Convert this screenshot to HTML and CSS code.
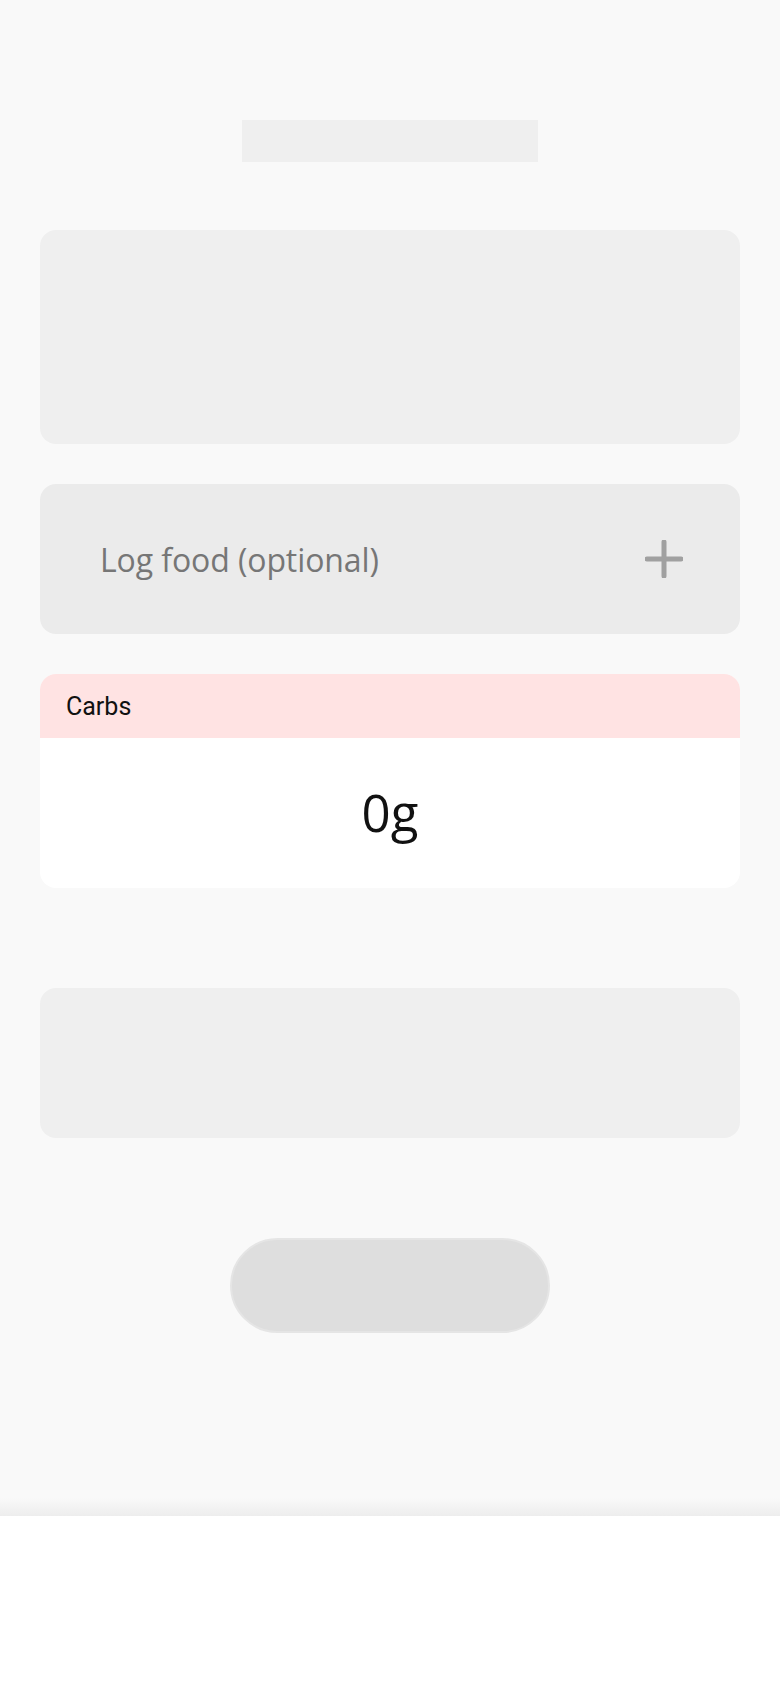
FILE: index.html
```html
<!DOCTYPE html>
<html lang="en">
<head>
    <meta charset="UTF-8">
    <meta name="viewport" content="width=device-width, initial-scale=1.0">
    <title>Log meal</title>
    <link rel="stylesheet" href="styles.css">
</head>
<body>
    <main class="screen">
        <div class="title-skeleton"></div>

        <div class="card card-skeleton card-tall"></div>

        <button class="log-food" type="button">
            <span class="log-food-label">Log food (optional)</span>
            <svg class="plus-icon" viewBox="0 0 38 38" aria-hidden="true">
                <path d="M19 2v34M2 19h34" stroke="currentColor" stroke-width="5" stroke-linecap="round" fill="none"/>
            </svg>
        </button>

        <section class="card macro">
            <div class="macro-head">Carbs</div>
            <div class="macro-value">0g</div>
        </section>

        <div class="card card-skeleton card-short"></div>

        <div class="pill-skeleton"></div>
    </main>

    <footer class="bottom-bar"></footer>
</body>
</html>
```

FILE: styles.css
```css
:root {
    --page-bg: #f9f9f9;
    --skeleton: #efefef;
    --skeleton-dark: #dedede;
    --field-bg: #ebebeb;
    --muted: #767676;
    --icon: #a0a0a0;
    --carbs-bg: #ffe3e3;
}

* {
    box-sizing: border-box;
}

body {
    margin: 0;
    background: #fff;
    font-family: 'Open Sans', 'Noto Sans', sans-serif;
    color: #111;
}

.screen {
    height: 1516px;
    background: var(--page-bg);
    padding: 120px 40px 0;
    display: flex;
    flex-direction: column;
    position: relative;
}

.screen::after {
    content: "";
    position: absolute;
    left: 0;
    right: 0;
    bottom: 0;
    height: 18px;
    background: linear-gradient(to bottom, rgba(235, 235, 235, 0), #ededed);
}

.title-skeleton {
    width: 296px;
    height: 42px;
    margin: 0 auto 68px;
    background: var(--skeleton);
}

.card {
    border-radius: 16px;
    overflow: hidden;
}

.card-skeleton {
    background: var(--skeleton);
}

.card-tall {
    height: 214px;
    margin-bottom: 40px;
}

.card-short {
    height: 150px;
    margin-bottom: 100px;
}

.log-food {
    height: 150px;
    margin: 0 0 40px;
    padding: 0 57px 0 60px;
    border: none;
    border-radius: 16px;
    background: var(--field-bg);
    display: flex;
    align-items: center;
    justify-content: space-between;
    font-family: inherit;
    cursor: pointer;
}

.log-food-label {
    font-size: 32px;
    color: var(--muted);
    letter-spacing: -0.1px;
}

.plus-icon {
    width: 38px;
    height: 38px;
    color: var(--icon);
}

.macro {
    height: 214px;
    margin-bottom: 100px;
    background: #fff;
    display: flex;
    flex-direction: column;
}

.macro-head {
    height: 64px;
    padding: 0 26px;
    display: flex;
    align-items: center;
    background: var(--carbs-bg);
    font-family: Roboto, 'Open Sans', sans-serif;
    font-size: 25px;
    color: #111;
}

.macro-value {
    flex: 1;
    display: flex;
    align-items: center;
    justify-content: center;
    font-size: 51px;
    color: #111;
    padding-bottom: 2px;
}

.pill-skeleton {
    width: 320px;
    height: 95px;
    margin: 0 auto;
    border-radius: 48px;
    background: var(--skeleton-dark);
    border: 2px solid #e5e5e5;
}

.bottom-bar {
    height: 172px;
    background: #fff;
}
```
